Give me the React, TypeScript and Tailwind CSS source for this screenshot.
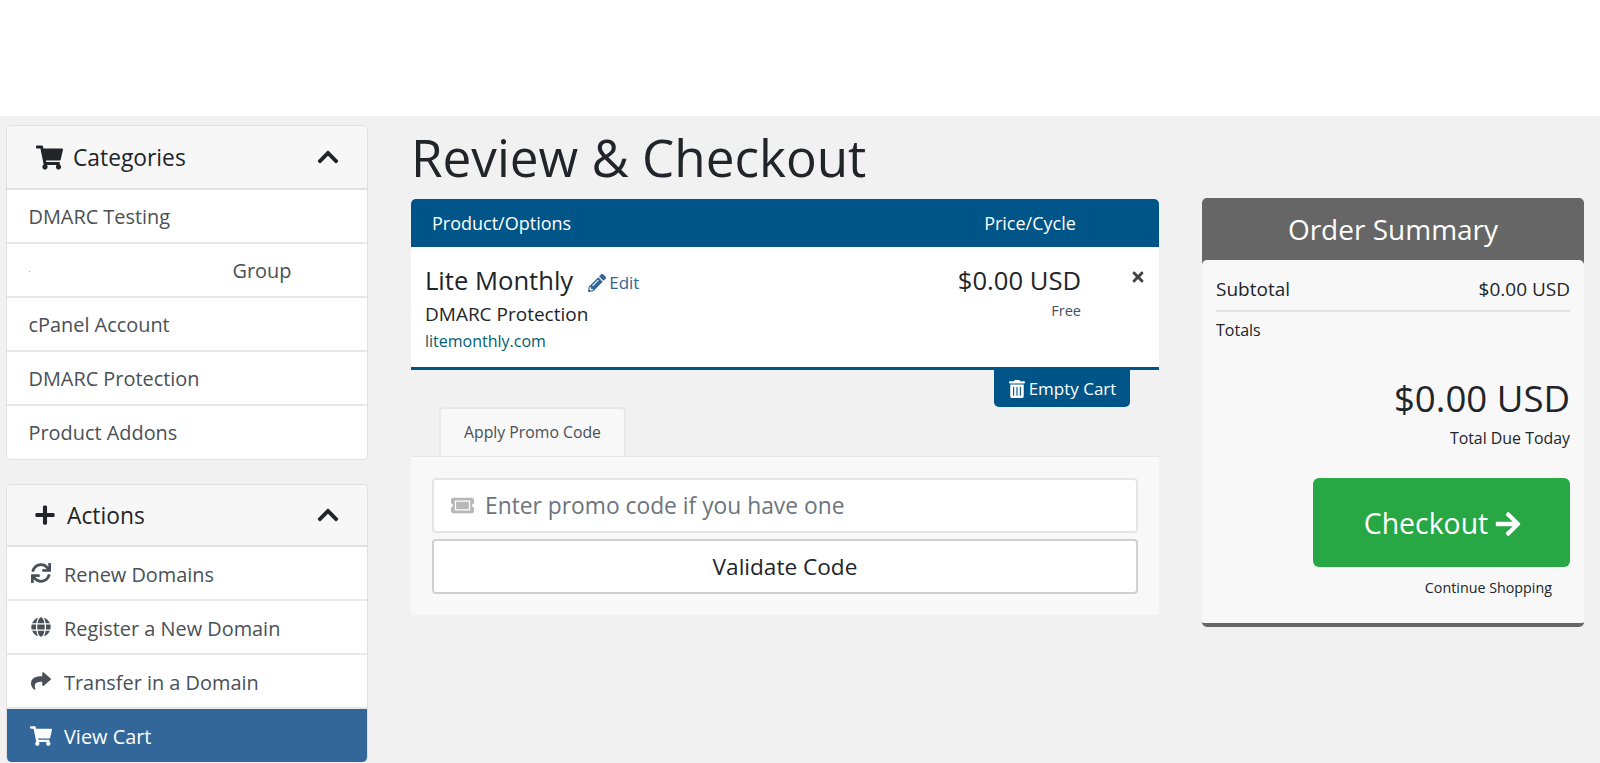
import type { ReactNode } from 'react';
import {
  FaArrowRight,
  FaChevronUp,
  FaGlobe,
  FaPencilAlt,
  FaPlus,
  FaShare,
  FaShoppingCart,
  FaSync,
  FaTicketAlt,
  FaTimes,
  FaTrashAlt,
} from 'react-icons/fa';

function PanelHeader({ icon, title, tall }: { icon: ReactNode; title: string; tall?: boolean }) {
  return (
    <div
      className={`flex items-center justify-between border-b-2 border-[#e2e2e2] bg-[#f7f7f7] pl-[29px] pr-[27px] text-[22.8px] text-[#212529] ${tall ? 'h-[64px]' : 'h-[62px]'}`}
    >
      <div className="flex items-center">
        {icon}
        <span className="pt-[3px]">{title}</span>
      </div>
      <FaChevronUp className="text-[24px]" />
    </div>
  );
}

function CategoryRow({ children, last = false }: { children: ReactNode; last?: boolean }) {
  return (
    <div
      className={`flex items-center pl-[21.5px] text-[19.9px] text-[#495057] ${last ? 'h-[53px]' : 'h-[54px] border-b-2 border-[#e8e8e8] pt-[2px]'}`}
    >
      {children}
    </div>
  );
}

function ActionRow({ icon, label, active = false }: { icon: ReactNode; label: string; active?: boolean }) {
  return (
    <div
      className={`flex items-center gap-[13px] pl-[23px] text-[19.9px] ${
        active ? 'h-[53px] bg-[#336699] text-white' : 'h-[54px] border-b-2 border-[#e8e8e8] text-[#495057]'
      }`}
    >
      <span className="flex w-[21px] justify-center text-[20px]">{icon}</span>
      <span className={active ? 'pt-[2px]' : 'pt-[4px]'}>{label}</span>
    </div>
  );
}

export default function App() {
  return (
    <div className="h-[763px] overflow-hidden bg-[#f1f1f1] font-['Open_Sans',sans-serif]">
      <div className="h-[116px] bg-white" />

      <div className="flex items-start">
        {/* sidebar */}
        <aside className="ml-[6px] mt-[9px] w-[362px] shrink-0">
          <div className="overflow-hidden rounded-[5px] border border-[#e0e0e0] bg-white">
            <PanelHeader tall icon={<FaShoppingCart className="mr-[10px] text-[27px]" />} title="Categories" />
            <CategoryRow>DMARC Testing</CategoryRow>
            <CategoryRow>
              <span className="h-px w-px bg-[#d99a7a]" />
              <span className="ml-[203px]">Group</span>
            </CategoryRow>
            <CategoryRow>cPanel Account</CategoryRow>
            <CategoryRow>DMARC Protection</CategoryRow>
            <CategoryRow last>Product Addons</CategoryRow>
          </div>

          <div className="mt-[24px] overflow-hidden rounded-[5px] border border-b-0 border-[#e0e0e0] bg-white">
            <PanelHeader icon={<FaPlus className="-ml-[2px] mr-[11px] text-[22px]" />} title="Actions" />
            <ActionRow icon={<FaSync />} label="Renew Domains" />
            <ActionRow icon={<FaGlobe />} label="Register a New Domain" />
            <ActionRow icon={<FaShare />} label="Transfer in a Domain" />
            <ActionRow icon={<FaShoppingCart className="shrink-0 text-[22px]" />} label="View Cart" active />
          </div>
        </aside>

        {/* cart column */}
        <main className="ml-[43px] w-[748px] shrink-0">
          <h1 className="h-[83px] text-[51.2px] leading-[83px] text-[#212529]">Review &amp; Checkout</h1>

          <div className="flex h-[48px] items-center rounded-t-[5px] bg-[#005588] text-[18px] text-white">
            <span className="ml-[21px]">Product/Options</span>
            <span className="ml-[413px]">Price/Cycle</span>
          </div>

          <div className="relative h-[123px] border-b-[3px] border-[#005588] bg-white pl-[14px]">
            <div className="flex items-center pt-[18px] leading-[32px]">
              <span className="text-[25.6px] text-[#212529]">Lite Monthly</span>
              <FaPencilAlt className="ml-[15px] translate-y-[2px] text-[18px] text-[#336699]" />
              <span className="ml-[3px] translate-y-[2px] text-[17px] text-[#336699]">Edit</span>
            </div>
            <div className="mt-[4px] text-[19px] leading-[26px] text-[#212529]">DMARC Protection</div>
            <div className="mt-[2px] text-[16px] leading-[24px] text-[#00606f]">litemonthly.com</div>

            <div className="absolute right-[78px] top-[18px] text-right">
              <div className="text-[25.6px] leading-[32px] text-[#212529]">$0.00 USD</div>
              <div className="mt-[4px] text-[14.5px] leading-[20px] text-[#495057]">Free</div>
            </div>
            <FaTimes className="absolute right-[13px] top-[22px] text-[16px] text-[#444]" />
          </div>

          <div className="flex justify-end pr-[29px]">
            <div className="flex h-[37px] w-[136px] items-center justify-center gap-[3px] rounded-b-[5px] bg-[#005588] text-[17px] text-white">
              <FaTrashAlt className="text-[18px]" />
              <span>Empty Cart</span>
            </div>
          </div>

          <div className="pl-[28px]">
            <div className="flex h-[49px] w-[187px] items-center justify-center rounded-t-[5px] border-x-2 border-t-2 border-[#e8e8e8] bg-[#f8f8f8] text-[15.8px] text-[#495057]">
              Apply Promo Code
            </div>
          </div>

          <div className="h-[159px] border-t border-[#e8e8e8] bg-[#f8f8f8] px-[21px] pt-[21px]">
            <div className="flex h-[55px] items-center rounded-[4px] border-2 border-[#e5e5e5] bg-white pl-[17px] text-[22.8px] text-[#6c757d]">
              <FaTicketAlt className="text-[23px] text-[#b8b8b8]" />
              <span className="ml-[11px] pt-[2px]">Enter promo code if you have one</span>
            </div>
            <div className="mt-[6px] flex h-[55px] items-center justify-center rounded-[4px] border-2 border-[#d0d0d0] bg-white text-[22.6px] text-[#212529]">
              Validate Code
            </div>
          </div>
        </main>

        {/* order summary */}
        <section className="ml-[43px] mt-[82px] w-[382px] shrink-0 overflow-hidden rounded-[5px] border-b-[4px] border-[#666666] bg-[#666666]">
          <div className="flex h-[62px] items-center justify-center pb-[1px] text-[28px] text-white">Order Summary</div>
          <div className="h-[363px] rounded-t-[5px] bg-[#f8f8f8] px-[14px]">
            <div className="flex h-[52px] items-center justify-between border-b-2 border-[#e2e2e2] pt-[8px] text-[19px] text-[#212529]">
              <span>Subtotal</span>
              <span>$0.00 USD</span>
            </div>
            <div className="mt-[6px] text-[16px] leading-[24px] text-[#212529]">Totals</div>
            <div className="mt-[31px] text-right text-[36.6px] leading-[50px] text-[#212529]">$0.00 USD</div>
            <div className="mt-[3px] text-right text-[15.9px] leading-[24px] text-[#212529]">Total Due Today</div>
            <div className="ml-auto mt-[28px] flex h-[89px] w-[257px] items-center justify-center gap-[6px] rounded-[6px] bg-[#28a745] pl-[3px] pt-[2px] text-[28.4px] text-white">
              <span>Checkout</span>
              <FaArrowRight className="text-[28px]" />
            </div>
            <div className="mt-[10px] pr-[18px] text-right text-[14.3px] leading-[22px] text-[#212529]">Continue Shopping</div>
          </div>
        </section>
      </div>
    </div>
  );
}
